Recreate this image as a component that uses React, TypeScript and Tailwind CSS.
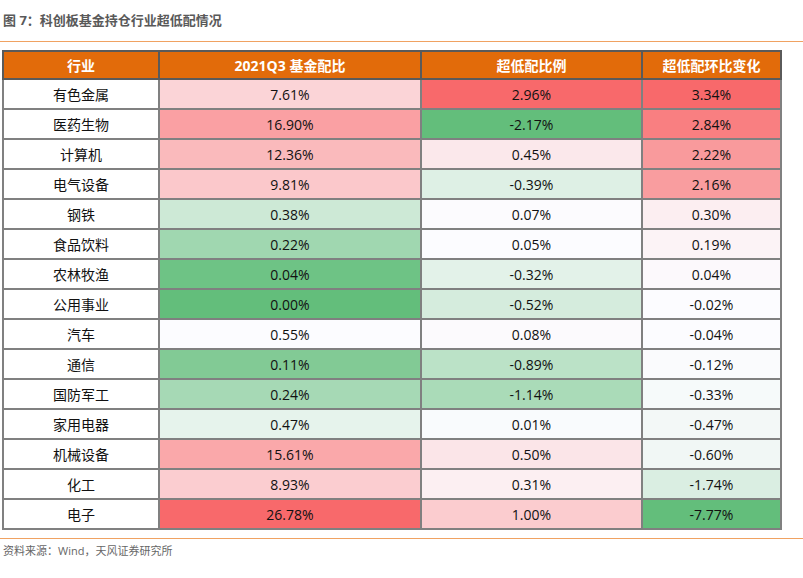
import React from "react";

type Row = [string, number, number, number];

const rows: Row[] = [
  ["有色金属", 7.61, 2.96, 3.34],
  ["医药生物", 16.9, -2.17, 2.84],
  ["计算机", 12.36, 0.45, 2.22],
  ["电气设备", 9.81, -0.39, 2.16],
  ["钢铁", 0.38, 0.07, 0.3],
  ["食品饮料", 0.22, 0.05, 0.19],
  ["农林牧渔", 0.04, -0.32, 0.04],
  ["公用事业", 0.0, -0.52, -0.02],
  ["汽车", 0.55, 0.08, -0.04],
  ["通信", 0.11, -0.89, -0.12],
  ["国防军工", 0.24, -1.14, -0.33],
  ["家用电器", 0.47, 0.01, -0.47],
  ["机械设备", 15.61, 0.5, -0.6],
  ["化工", 8.93, 0.31, -1.74],
  ["电子", 26.78, 1.0, -7.77],
];

const GREEN = [99, 190, 123];
const WHITE = [252, 252, 255];
const RED = [248, 105, 107];

function colScale(values: number[]) {
  const sorted = [...values].sort((a, b) => a - b);
  const min = sorted[0];
  const max = sorted[sorted.length - 1];
  const mid = sorted[Math.floor(sorted.length / 2)];
  return (v: number) => {
    const from = WHITE;
    let to = WHITE;
    let t = 0;
    if (v >= mid) {
      to = RED;
      t = max === mid ? 0 : (v - mid) / (max - mid);
    } else {
      to = GREEN;
      t = mid === min ? 0 : (mid - v) / (mid - min);
    }
    const c = from.map((f, i) => Math.round(f + (to[i] - f) * t));
    return `rgb(${c[0]},${c[1]},${c[2]})`;
  };
}

const s1 = colScale(rows.map((r) => r[1]));
const s2 = colScale(rows.map((r) => r[2]));
const s3 = colScale(rows.map((r) => r[3]));

const fmt = (v: number) => `${v.toFixed(2)}%`;

export default function App() {
  return (
    <div
      className="w-[803px] h-[578px] bg-white text-black"
      style={{ fontFamily: '"Open Sans", "Noto Sans CJK SC", sans-serif' }}
    >
      <div className="h-[42px] border-b border-[#f0a262] pl-[3px] pt-[11px]">
        <div className="text-[13px] leading-[18px] font-bold text-[#595959]">
          图 7：科创板基金持仓行业超低配情况
        </div>
      </div>
      <div className="pt-[8px] pl-[2px]">
        <table className="border-collapse table-fixed w-[778px] border-2 border-[#333333] text-[14px] text-[#111]">
          <colgroup>
            <col className="w-[156px]" />
            <col className="w-[262px]" />
            <col className="w-[221px]" />
            <col className="w-[139px]" />
          </colgroup>
          <thead>
            <tr className="h-[28px] bg-[#e26b0a] text-white font-bold">
              <th className="border-2 border-[#5a5a5a] font-bold p-0">行业</th>
              <th className="border-2 border-[#5a5a5a] font-bold p-0">2021Q3 基金配比</th>
              <th className="border-2 border-[#5a5a5a] font-bold p-0">超低配比例</th>
              <th className="border-2 border-[#5a5a5a] font-bold p-0">超低配环比变化</th>
            </tr>
          </thead>
          <tbody>
            {rows.map((r) => (
              <tr key={r[0]} className="h-[30px]">
                <td className="border-2 border-[#808080] text-center p-0">{r[0]}</td>
                <td className="border-2 border-[#808080] text-center p-0" style={{ backgroundColor: s1(r[1]) }}>
                  {fmt(r[1])}
                </td>
                <td className="border-2 border-[#808080] text-center p-0" style={{ backgroundColor: s2(r[2]) }}>
                  {fmt(r[2])}
                </td>
                <td className="border-2 border-[#808080] text-center p-0" style={{ backgroundColor: s3(r[3]) }}>
                  {fmt(r[3])}
                </td>
              </tr>
            ))}
          </tbody>
        </table>
      </div>
      <div className="mt-[8px] border-t border-[#f0a262] pl-[3px] pt-[4px]">
        <div className="text-[11px] leading-[16px] text-[#666666]">资料来源：Wind，天风证券研究所</div>
      </div>
    </div>
  );
}
